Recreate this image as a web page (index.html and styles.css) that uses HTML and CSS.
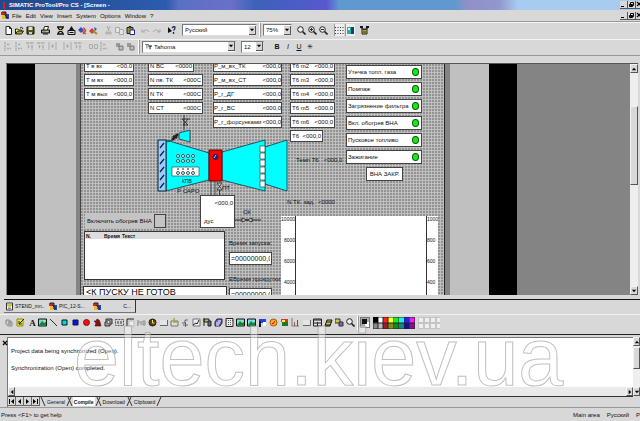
FILE: index.html
```html
<!DOCTYPE html>
<html lang="ru">
<head>
    <meta charset="UTF-8">
    <meta name="viewport" content="width=device-width, initial-scale=1.0">
    <title>SIMATIC ProTool/Pro CS</title>
    <link rel="stylesheet" href="styles.css">
</head>
<body>
    <!-- shared icons -->
    <svg class="defs" width="0" height="0">
        <symbol id="min" viewBox="0 0 7 7"><path d="M1 5.5h3" stroke="#000"/></symbol>
        <symbol id="restore" viewBox="0 0 7 7"><path d="M2.5 1.5h3v3h-3zM1.5 3.5h3v2h-3z" fill="#ddd" stroke="#000"/></symbol>
        <symbol id="close" viewBox="0 0 7 7"><path d="M1 1l4 4M5 1L1 5" stroke="#000" stroke-width="1.2"/></symbol>
        <symbol id="up" viewBox="0 0 7 7"><path d="M1 5l2.5-3L6 5z"/></symbol>
        <symbol id="down" viewBox="0 0 7 7"><path d="M1 2l2.5 3L6 2z"/></symbol>
        <symbol id="left" viewBox="0 0 7 7"><path d="M5 1L2 3.5 5 6z"/></symbol>
        <symbol id="right" viewBox="0 0 7 7"><path d="M2 1l3 2.500L2 6z"/></symbol>
        <symbol id="first" viewBox="0 0 7 7"><path d="M6 1L3 3.500 6 6zM1 1h1v5H1z"/></symbol>
        <symbol id="last" viewBox="0 0 7 7"><path d="M1 1l3 2.500L1 6zM5 1h1v5H5z"/></symbol>
        <symbol id="app" viewBox="0 0 9 9"><path d="M0 1h5v3H0z" fill="#d22"/><path d="M1 4h4v4H1z" fill="#eb2"/><path d="M5 3h3v5H5z" fill="#24b"/><path d="M1 1h4v6M3 3l4 4" stroke="#222" fill="none"/></symbol>
        <symbol id="page" viewBox="0 0 9 9"><path d="M1.500 1h6v7h-6z" fill="#fff" stroke="#333"/><path d="M2 2h5v2H2z" fill="#cc3"/><path d="M3 5h3M3 6.500h3" stroke="#555" stroke-width=".7"/></symbol>
        <symbol id="new" viewBox="0 0 9 9"><path d="M2 .5h3.500l2 2v6H2z" fill="#fff" stroke="#222"/><path d="M5.500.5v2h2" fill="none" stroke="#222"/></symbol>
        <symbol id="open" viewBox="0 0 9 9"><path d="M.5 8V3h2l1 1h3v1.500" fill="#ffa" stroke="#220"/><path d="M.5 8l2-3h6l-2 3z" fill="#aa3" stroke="#220"/><path d="M5 2q2-2 3 1" fill="none" stroke="#222"/></symbol>
        <symbol id="save" viewBox="0 0 9 9"><path d="M1 1h7v7H1z" fill="#551" stroke="#111"/><path d="M2.500 1h4v3h-4z" fill="#ddd"/><path d="M3 6h3v2H3z" fill="#ccc"/></symbol>
        <symbol id="print" viewBox="0 0 9 9"><path d="M2.500 4l1-3.500h4L6.500 4" fill="#fff" stroke="#222"/><path d="M.5 4h8v3h-8z" fill="#999" stroke="#111"/><path d="M2 8h5" stroke="#111"/><path d="M5 5.500h2" stroke="#dd3"/></symbol>
        <symbol id="gen" viewBox="0 0 9 9"><path d="M1 1h7M2 2l5 5M7 2L2 7M1 8h7" stroke="#111" stroke-width="1.300"/><path d="M3 4h4v1H3z" fill="#cc4"/></symbol>
        <symbol id="load" viewBox="0 0 9 9"><path d="M1 4.500h7v4H1z" fill="#ddd" stroke="#111"/><path d="M2 4l2.500-4L7 4z" fill="#111"/><path d="M2.500 6.500h4" stroke="#111"/></symbol>
        <symbol id="xfer" viewBox="0 0 9 9"><path d="M0 4l3-3 3 3-3 3z" fill="#25c"/><path d="M5 1l3 2-2 2z" fill="#d43"/><path d="M4 5l4 3M5 8l3-4" stroke="#c42" stroke-width="1.300"/></symbol>
        <symbol id="xfer2" viewBox="0 0 9 9"><path d="M0 5l3-3 3 3-3 3z" fill="#c43"/><path d="M5 1l3 2-2 2z" fill="#25c"/><path d="M4 5l4 3" stroke="#a82" stroke-width="2"/></symbol>
        <symbol id="cut" viewBox="0 0 9 9"><path d="M3 0l2 5M6 0L4 5" stroke="#aaa"/><path d="M2 6h2v2H2zM5 6h2v2H5z" fill="none" stroke="#aaa"/></symbol>
        <symbol id="copy" viewBox="0 0 9 9"><path d="M.5 1.500h4v5h-4zM4.500 3.500h4v5h-4z" fill="#e4e4e4" stroke="#aaa"/></symbol>
        <symbol id="paste" viewBox="0 0 9 9"><path d="M1 1.500h6v6H1z" fill="#993" stroke="#222"/><path d="M3 .5h2v1.500H3z" fill="#ccc" stroke="#222"/><path d="M4 4h4.500v4.500H4z" fill="#fff" stroke="#228"/></symbol>
        <symbol id="undo" viewBox="0 0 9 9"><path d="M1 3v3h3M1 6q5-4 7 0" fill="none" stroke="#aaa"/></symbol>
        <symbol id="redo" viewBox="0 0 9 9"><path d="M8 3v3H5M8 6Q3 2 1 6" fill="none" stroke="#aaa"/></symbol>
        <symbol id="help" viewBox="0 0 9 9"><path d="M1 1v6l4-2z" fill="#111"/><path d="M5 2q3-3 3 0 0 1-1.500 2.500M6.500 6v2" fill="none" stroke="#226" stroke-width="1.300"/></symbol>
        <symbol id="zoom" viewBox="0 0 9 9"><circle cx="3.500" cy="3.500" r="2.800" fill="#eee" stroke="#222"/><path d="M5.500 5.500l3 3" stroke="#222" stroke-width="1.600"/></symbol>
        <symbol id="zoomin" viewBox="0 0 9 9"><circle cx="3.500" cy="3.500" r="2.800" fill="#eee" stroke="#222"/><path d="M5.500 5.500l3 3" stroke="#222" stroke-width="1.600"/><path d="M2 3.500h3M3.500 2v3" stroke="#222"/></symbol>
        <symbol id="zoomout" viewBox="0 0 9 9"><circle cx="3.500" cy="3.500" r="2.800" fill="#eee" stroke="#222"/><path d="M5.500 5.500l3 3" stroke="#222" stroke-width="1.600"/><path d="M2 3.500h3" stroke="#222"/></symbol>
        <symbol id="dots" viewBox="0 0 9 9"><path d="M0 1.500h9M0 4.500h9M0 7.500h9" stroke="#333" stroke-dasharray="1 1.500"/></symbol>
        <symbol id="snap" viewBox="0 0 9 9"><path d="M1 1h6v7H1z" fill="#3aa"/><path d="M5 1h3v7H5z" fill="#146"/><path d="M2 2h2v2H2z" fill="#dff"/></symbol>
        <symbol id="tree" viewBox="0 0 9 9"><path d="M0 0h3v2H0zM6 0h3v2H6z" fill="#113"/><path d="M2 3h5v5H2z" fill="#cb3" stroke="#222"/><path d="M1 2l3 2 4-2M3 6h3" stroke="#222" fill="none"/></symbol>
        <symbol id="al1" viewBox="0 0 9 9"><path d="M1 0v9M3 2.500h3M3 6.500h4" stroke="#aaa" stroke-width="1.400" stroke-dasharray="2 .7"/></symbol>
        <symbol id="al2" viewBox="0 0 9 9"><path d="M0 1h8M2.500 3v4M6 3v5" stroke="#aaa" stroke-width="1.400" stroke-dasharray="3 .7"/></symbol>
        <symbol id="al3" viewBox="0 0 9 9"><path d="M1 0v8M8 0v8M3 4h3M4.500 2v4" stroke="#aaa"/></symbol>
        <symbol id="al4" viewBox="0 0 9 9"><path d="M.5 2.500h3v4h-3zM5.500 2.500h3v4h-3z" fill="none" stroke="#aaa"/></symbol>
        <symbol id="layer" viewBox="0 0 9 9"><path d="M1 1h4v4H1z" fill="#999"/><path d="M4 4h4v4H4z" fill="#bbb" stroke="#777"/></symbol>
        <symbol id="fnt" viewBox="0 0 9 9"><path d="M0 2h5M2.500 2v5" stroke="#777" stroke-width="1.300"/><path d="M4 4h5M6.500 4v4" stroke="#111" stroke-width="1.300"/></symbol>
        <symbol id="link" viewBox="0 0 9 9"><path d="M1 2h3l3 2v4H3L1 6z" fill="#ccc" stroke="#888"/><path d="M3 4h3M3 6h3" stroke="#777"/></symbol>
        <symbol id="note" viewBox="0 0 9 9"><path d="M1 1h6v7H1z" fill="#ee3" stroke="#882"/><path d="M3 6l5-5M3 3v3h3" stroke="#222" fill="none"/></symbol>
        <symbol id="pic" viewBox="0 0 9 9"><path d="M.5 1h8v7h-8z" fill="#7de" stroke="#111"/><path d="M1 7l3-4 2 2 2-1v3.500H1z" fill="#182"/><path d="M6 2h1v1H6z" fill="#ee2"/></symbol>
        <symbol id="line" viewBox="0 0 9 9"><path d="M1 1l7 7" stroke="#333"/></symbol>
        <symbol id="cyan" viewBox="0 0 9 9"><path d="M2 2h5v5H2z" fill="#0dd" stroke="#111"/></symbol>
        <symbol id="blue" viewBox="0 0 9 9"><path d="M2 2h5v5H2z" fill="#11d" stroke="#114"/></symbol>
        <symbol id="red" viewBox="0 0 9 9"><circle cx="4.500" cy="4.500" r="3" fill="#e11" stroke="#811"/></symbol>
        <symbol id="poly" viewBox="0 0 9 9"><path d="M2 8l1-3-2-2h2l1-2 2 1 1 2 1 4z" fill="#811" stroke="#411" stroke-width=".6"/></symbol>
        <symbol id="gear" viewBox="0 0 9 9"><path d="M2 1h6v5H6v2H1V4h1z" fill="#999" stroke="#333"/><circle cx="4.500" cy="4" r="1.500" fill="#eee" stroke="#222" stroke-width=".7"/></symbol>
        <symbol id="io" viewBox="0 0 9 9"><path d="M.5 1.500h8v6h-8z" fill="none" stroke="#555" stroke-dasharray="2 1"/><path d="M3 3v3M6 3v3" stroke="#333"/></symbol>
        <symbol id="box" viewBox="0 0 9 9"><path d="M1 8V1h7" fill="none" stroke="#222"/><path d="M3 3h5v5H3z" fill="#eee" stroke="#bbb"/></symbol>
        <symbol id="num" viewBox="0 0 9 9"><path d="M0 3h2v2H0v2h2M4 3v4M8 3H6v4h2z" fill="none" stroke="#888"/></symbol>
        <symbol id="clock" viewBox="0 0 9 9"><circle cx="4.500" cy="4.500" r="3.500" fill="#541" stroke="#221"/><path d="M4.500 2v3h2" fill="none" stroke="#fd6"/></symbol>
        <symbol id="btn" viewBox="0 0 9 9"><path d="M1 2h7v5H1z" fill="#e4e4e4"/><path d="M1 7.500h7.500V2" fill="none" stroke="#666"/></symbol>
        <symbol id="hand" viewBox="0 0 9 9"><path d="M1 3h7v5H1z" fill="#ddd" stroke="#777"/><path d="M4 0v4h3" fill="none" stroke="#aa2" stroke-width="1.500"/></symbol>
        <symbol id="sw" viewBox="0 0 9 9"><path d="M1 5h3V2h3M2 7h5M4.500 4v5" stroke="#666" fill="none"/></symbol>
        <symbol id="graph" viewBox="0 0 9 9"><path d="M1 1h7v7H1z" fill="#eee" stroke="#777"/><path d="M1 7l3-2 1 1 2-4" fill="none" stroke="#222"/></symbol>
        <symbol id="bars" viewBox="0 0 9 9"><path d="M1 0v8M1 1h5v3H1z" stroke="#222" fill="#bb5"/><path d="M5 3h3v5H5z" fill="#669" stroke="#222"/></symbol>
        <symbol id="cube" viewBox="0 0 9 9"><path d="M1 4l2-3h5v4L6 8H1z" fill="#66b" stroke="#224"/><path d="M2 5h4M2 7h3M4 3h3" stroke="#fff"/></symbol>
        <symbol id="grid" viewBox="0 0 9 9"><path d="M1 .5h7v8H1z" fill="#eee" stroke="#222"/><path d="M1 2.500h7M3 4.500h4M3 6.500h4" stroke="#555" stroke-dasharray="1 1"/></symbol>
        <symbol id="win" viewBox="0 0 9 9"><path d="M.5 1h8v7h-8z" fill="#ddd" stroke="#222"/><path d="M1 2h7M1 5h7M4.500 4v4" stroke="#222"/></symbol>
        <symbol id="flag" viewBox="0 0 9 9"><path d="M1 1h7v4H1z" fill="#24d"/><path d="M1 3h2v6H1z" fill="#114"/><path d="M5 4h3v4H5z" fill="#fff"/></symbol>
        <symbol id="sun" viewBox="0 0 9 9"><circle cx="4.500" cy="4.500" r="3.500" fill="#fa2" stroke="#a51"/><path d="M3 5l1 1 2-3" fill="none" stroke="#a22"/></symbol>
        <symbol id="brick" viewBox="0 0 9 9"><path d="M1 1h7v3H1z" fill="#d33"/><path d="M2 4h6v4H2z" fill="#272"/><path d="M2 2h3v2H2z" fill="#fe5"/></symbol>
        <symbol id="chart" viewBox="0 0 9 9"><path d="M1 0v8h7" fill="none" stroke="#777"/><path d="M3 4h1v4H3z" fill="#a55"/><path d="M6 2h1v6H6z" fill="#557"/></symbol>
        <symbol id="book" viewBox="0 0 9 9"><path d="M1 8l2-6h5L6 8z" fill="#cc6" stroke="#111"/><path d="M3 4h4M2 7h4" stroke="#111"/></symbol>
        <symbol id="find" viewBox="0 0 9 9"><path d="M0 1h5v4H0z" fill="#cc4" stroke="#333"/><path d="M4 4h4v4H4z" fill="#76b" stroke="#333"/></symbol>
    </svg>

    <div class="app">
        <header class="title-bar">
            <span class="app-mark"></span>
            <h1>SIMATIC ProTool/Pro CS - [Screen -</h1>
            <div class="win-buttons">
                <button aria-label="Minimize"><svg><use href="#min"/></svg></button>
                <button aria-label="Restore"><svg><use href="#restore"/></svg></button>
                <button aria-label="Close"><svg><use href="#close"/></svg></button>
            </div>
        </header>

        <nav class="menu-bar">
            <svg class="icon"><use href="#app"/></svg>
            <button>File</button><button>Edit</button><button>View</button><button>Insert</button><button>System</button><button>Options</button><button>Window</button><button>?</button>
            <div class="win-buttons">
                <button aria-label="Minimize"><svg><use href="#min"/></svg></button>
                <button aria-label="Restore"><svg><use href="#restore"/></svg></button>
                <button aria-label="Close"><svg><use href="#close"/></svg></button>
            </div>
        </nav>

        <div class="toolbar">
            <div class="group">
                <button aria-label="New"><svg><use href="#new"/></svg></button>
                <button aria-label="Open"><svg><use href="#open"/></svg></button>
                <button aria-label="Save"><svg><use href="#save"/></svg></button>
            </div>
            <div class="group"><button aria-label="Print"><svg><use href="#print"/></svg></button></div>
            <div class="group">
                <button aria-label="Generate"><svg><use href="#gen"/></svg></button>
                <button aria-label="Download"><svg><use href="#load"/></svg></button>
                <button aria-label="Transfer"><svg><use href="#xfer"/></svg></button>
                <button aria-label="Transfer back"><svg><use href="#xfer2"/></svg></button>
            </div>
            <div class="group">
                <button aria-label="Cut"><svg><use href="#cut"/></svg></button>
                <button aria-label="Copy"><svg><use href="#copy"/></svg></button>
                <button aria-label="Paste"><svg><use href="#paste"/></svg></button>
            </div>
            <div class="group">
                <button aria-label="Undo"><svg><use href="#undo"/></svg></button>
                <button aria-label="Redo"><svg><use href="#redo"/></svg></button>
            </div>
            <div class="group"><button aria-label="Help"><svg><use href="#help"/></svg></button></div>
            <div class="combo combo-lang"><select aria-label="Language"><option>Русский</option></select><svg><use href="#down"/></svg></div>
            <span class="sep"></span>
            <div class="combo combo-zoom"><select aria-label="Zoom"><option>75%</option></select><svg><use href="#down"/></svg></div>
            <div class="group">
                <button aria-label="Zoom area"><svg><use href="#zoom"/></svg></button>
                <button aria-label="Zoom in"><svg><use href="#zoomin"/></svg></button>
                <button aria-label="Zoom out"><svg><use href="#zoomout"/></svg></button>
            </div>
            <div class="group">
                <button class="pressed" aria-label="Grid"><svg><use href="#dots"/></svg></button>
                <button class="pressed" aria-label="Snap"><svg><use href="#snap"/></svg></button>
            </div>
            <div class="group"><button aria-label="References"><svg><use href="#tree"/></svg></button></div>
        </div>

        <div class="toolbar toolbar-format">
            <div class="group">
                <button aria-label="Align left"><svg><use href="#al1"/></svg></button>
                <button aria-label="Align right"><svg><use href="#al1"/></svg></button>
                <button aria-label="Align top"><svg><use href="#al2"/></svg></button>
                <button aria-label="Align bottom"><svg><use href="#al2"/></svg></button>
                <button aria-label="Center"><svg><use href="#al3"/></svg></button>
            </div>
            <div class="group">
                <button aria-label="Space across"><svg><use href="#al3"/></svg></button>
                <button aria-label="Space down"><svg><use href="#al2"/></svg></button>
            </div>
            <div class="group">
                <button aria-label="Same width"><svg><use href="#al4"/></svg></button>
                <button aria-label="Same height"><svg><use href="#al1"/></svg></button>
            </div>
            <div class="group">
                <button aria-label="To front"><svg><use href="#layer"/></svg></button>
                <button aria-label="To back"><svg><use href="#layer"/></svg></button>
            </div>
            <span class="sep"></span>
            <div class="combo combo-font"><svg class="icon"><use href="#fnt"/></svg><select aria-label="Font"><option>Tahoma</option></select><svg><use href="#down"/></svg></div>
            <div class="combo combo-size"><select aria-label="Size"><option>12</option></select><svg><use href="#down"/></svg></div>
            <div class="group styles">
                <button><b>B</b></button><button><i>I</i></button><button><u>U</u></button><button>✳</button>
            </div>
        </div>

        <main class="workspace">
            <div class="bezel bezel-left"></div>
            <div class="gutter"></div>
            <section class="screen">
                <div class="stack stack-temp">
                    <div class="field"><span>Т в вх</span><span>&lt;00,0</span></div>
                    <div class="field"><span>Т м вх</span><span>&lt;000,0</span></div>
                    <div class="field"><span>Т м вых</span><span>&lt;000,0</span></div>
                </div>
                <div class="stack stack-speed">
                    <div class="field field-short"><span>N ВС</span><span>&lt;0000</span></div>
                    <div class="field"><span>N пв. ТК</span><span>&lt;000C</span></div>
                    <div class="field"><span>N ТК</span><span>&lt;000C</span></div>
                    <div class="field"><span>N СТ</span><span>&lt;000C</span></div>
                </div>
                <div class="stack stack-pressure">
                    <div class="field"><span>Р_м_вх_ТК</span><span>&lt;000,0</span></div>
                    <div class="field"><span>Р_м_вх_СТ</span><span>&lt;000,0</span></div>
                    <div class="field"><span>Р_г_ДГ</span><span>&lt;000,0</span></div>
                    <div class="field"><span>Р_г_ВС</span><span>&lt;000,0</span></div>
                    <div class="field"><span>Р_г_форсунками</span><span>&lt;000,0</span></div>
                </div>
                <div class="stack stack-t6">
                    <div class="field"><span>Т6 m2</span><span>&lt;000,0</span></div>
                    <div class="field"><span>Т6 m3</span><span>&lt;000,0</span></div>
                    <div class="field"><span>Т6 m4</span><span>&lt;000,0</span></div>
                    <div class="field"><span>Т6 m5</span><span>&lt;000,0</span></div>
                    <div class="field"><span>Т6 m6</span><span>&lt;000,0</span></div>
                    <div class="field field-short"><span>Т6</span><span>&lt;000,0</span></div>
                </div>
                <div class="alarms">
                    <div class="field">Утечка топл. газа<i class="lamp"></i></div>
                    <div class="field">Помпаж<i class="lamp"></i></div>
                    <div class="field">Загрязнение фильтра<i class="lamp"></i></div>
                    <div class="field">Вкл. обогрев ВНА<i class="lamp"></i></div>
                    <div class="field">Пусковое топливо<i class="lamp"></i></div>
                    <div class="field">Зажигание<i class="lamp"></i></div>
                    <div class="field state">ВНА ЗАКР.</div>
                </div>

                <!-- gas turbine mimic -->
                <svg class="turbine" viewBox="70 50 140 120" width="140" height="120">
                    <g fill="#0ff" stroke="#134" stroke-width=".8">
                        <path d="M85 76l43 13v27l-43 11z"/>
                        <path d="M141 88l43-12v51l-43-11z"/>
                        <path d="M184 83l22-7v51l-22-7z"/>
                        <path d="M98 69l11-3v12l-11-3z"/>
                    </g>
                    <path d="M77 76h8v51h-8z" fill="#9cf" stroke="#123"/>
                    <path d="M79 84l4-5M79 92l4-5M79 100l4-5M79 108l4-5M79 116l4-5M79 124l4-5" stroke="#124" stroke-width="1.300"/>
                    <path d="M130 116v15M134 116v15" stroke="#333" stroke-width=".8"/>
                    <path d="M128 86h13v31h-13z" fill="#f00" stroke="#511"/>
                    <circle cx="134.500" cy="93" r="3" fill="#226"/><path d="M133 94l2-3" stroke="#9cf"/>
                    <g fill="#fff" stroke="#255" stroke-width=".7">
                        <path d="M179 82h5v6h-5zM179 89h5v6h-5zM179 96h5v6h-5zM179 103h5v6h-5zM179 110h5v6h-5zM179 117h5v6h-5z"/>
                        <path d="M91 103h27v9H91z"/>
                    </g>
                    <g fill="#dff" stroke="#244" stroke-width=".9">
                        <circle cx="97" cy="92" r="1.500"/><circle cx="102" cy="92" r="1.500"/><circle cx="107" cy="92" r="1.500"/><circle cx="112" cy="92" r="1.500"/>
                        <circle cx="97" cy="97" r="1.500"/><circle cx="102" cy="97" r="1.500"/><circle cx="107" cy="97" r="1.500"/><circle cx="112" cy="97" r="1.500"/>
                        <circle cx="97" cy="109" r="1.500"/><circle cx="102" cy="109" r="1.500"/><circle cx="107" cy="109" r="1.500"/><circle cx="112" cy="109" r="1.500"/>
                    </g>
                    <path d="M96 105h2M101 105h2M106 105h2M111 105h2" stroke="#222"/>
                    <path d="M91 76l6-6M92 72l4 2" stroke="#222" stroke-width="2.500"/>
                    <path d="M103 51v15M101 55h8M101 55l6 6M107 55l-5 6h5M91 76l-5 2" fill="none" stroke="#222" stroke-width=".8"/>
                    <path d="M136 119h5l-5 7h5z M138.500 126v5" fill="#ccc" stroke="#222" stroke-width=".8"/>
                    <path d="M154 156h26" stroke="#222"/><path d="M161 154v4l10-4v4z" fill="#ccc" stroke="#222" stroke-width=".8"/>
                </svg>
                <span class="tag tag-kpv">КПВ</span>
                <span class="tag tag-sapo">Р САРО</span>
                <span class="tag tag-pt">ПТ</span>
                <span class="tag tag-sk">СК</span>
                <div class="tank"><span>&lt;000,0</span><span>дус</span></div>
                <span class="tag tag-temp">Темп Т6 &nbsp; &lt;000,0</span>
                <span class="tag tag-ntk">N ТК &nbsp;зад. &nbsp;&lt;0000</span>

                <div class="heating"><label for="heat">Включить обогрев ВНА</label><button id="heat" aria-label="Включить"></button></div>
                <table class="messages">
                    <thead><tr><th>N.</th><th>Время</th><th>Текст</th></tr></thead>
                    <tbody><tr><td colspan="3"></td></tr></tbody>
                </table>
                <div class="ready">&lt;К ПУСКУ НЕ ГОТОВ</div>
                <div class="timers">
                    <label for="start">Время запуска:</label>
                    <input id="start" type="text" value="=00000000,0">
                    <label for="crank">ЕВремя прокрутки:</label>
                    <input id="crank" type="text" value="=00000000,0">
                </div>
                <div class="trend">
                    <div class="scale"><span>10000</span><span>8000</span><span>6000</span><span>4000</span></div>
                    <div class="plot"></div>
                    <div class="scale"><span>1000</span><span>800</span><span>600</span><span>400</span></div>
                </div>
            </section>
            <div class="gutter gutter-right"></div>
            <div class="bezel"></div>
            <div class="empty"></div>
            <div class="scroll-v">
                <button aria-label="Up"><svg><use href="#up"/></svg></button>
                <span class="thumb"></span>
                <button aria-label="Down"><svg><use href="#down"/></svg></button>
            </div>
        </main>

        <div class="doc-tabs">
            <button><svg class="icon"><use href="#page"/></svg>STEND_mn..</button>
            <button><svg class="icon"><use href="#app"/></svg>PIC_12-S...</button>
            <button class="active"><svg class="icon"><use href="#app"/></svg><span>C...</span></button>
        </div>

        <div class="palette">
            <button aria-label="Link"><svg><use href="#link"/></svg></button>
            <button aria-label="Note"><svg><use href="#note"/></svg></button>
            <button class="letter">A</button>
            <button aria-label="Graphic"><svg><use href="#pic"/></svg></button>
            <button aria-label="Line"><svg><use href="#line"/></svg></button>
            <button aria-label="Rectangle"><svg><use href="#cyan"/></svg></button>
            <button aria-label="Filled rectangle"><svg><use href="#blue"/></svg></button>
            <button aria-label="Ellipse"><svg><use href="#red"/></svg></button>
            <button aria-label="Polygon"><svg><use href="#poly"/></svg></button>
            <button aria-label="Control"><svg><use href="#gear"/></svg></button>
            <button aria-label="Field"><svg><use href="#io"/></svg></button>
            <button aria-label="Frame"><svg><use href="#box"/></svg></button>
            <button aria-label="Number"><svg><use href="#num"/></svg></button>
            <button aria-label="Clock"><svg><use href="#clock"/></svg></button>
            <button aria-label="Button"><svg><use href="#btn"/></svg></button>
            <button aria-label="State button"><svg><use href="#hand"/></svg></button>
            <button aria-label="Switch"><svg><use href="#sw"/></svg></button>
            <button aria-label="Trend"><svg><use href="#graph"/></svg></button>
            <button aria-label="Bar"><svg><use href="#bars"/></svg></button>
            <button aria-label="Messages"><svg><use href="#cube"/></svg></button>
            <button aria-label="Table"><svg><use href="#grid"/></svg></button>
            <button aria-label="Picture"><svg><use href="#pic"/></svg></button>
            <button aria-label="Picture list"><svg><use href="#pic"/></svg></button>
            <button aria-label="Flag"><svg><use href="#flag"/></svg></button>
            <button aria-label="Gauge"><svg><use href="#sun"/></svg></button>
            <button aria-label="Tiles"><svg><use href="#brick"/></svg></button>
            <button aria-label="Chart"><svg><use href="#chart"/></svg></button>
            <button aria-label="Panel"><svg><use href="#btn"/></svg></button>
            <button aria-label="Window"><svg><use href="#win"/></svg></button>
            <button aria-label="Book"><svg><use href="#book"/></svg></button>
            <button aria-label="Find"><svg><use href="#find"/></svg></button>
            <button aria-label="Zoom"><svg><use href="#zoom"/></svg></button>
            <span class="sep"></span>
            <span class="current"></span>
            <svg class="colors" viewBox="0 0 42 12">
                <path d="M0 0h42v12H0z" fill="#222"/>
                <path d="M0 0h5v5H0z" fill="#000"/><path d="M5.500.5h4v5h-4z" fill="#fff"/><path d="M10.500.5h4v5h-4z" fill="#f22"/><path d="M15.500.5h5v5h-5z" fill="#ff2"/><path d="M21 .5h4.500v5H21z" fill="#1e2"/><path d="M26 .5h5v5h-5z" fill="#2ee"/><path d="M31.500.5h4.500v5h-4.500z" fill="#22e"/><path d="M36.500.5h5v5h-5z" fill="#e2d"/>
                <path d="M.5 6.500h4v5h-4z" fill="#888"/><path d="M5.500 6.500h4v5h-4z" fill="#bbb"/><path d="M10.500 6.500h4v5h-4z" fill="#922"/><path d="M15.500 6.500h5v5h-5z" fill="#882"/><path d="M21 6.500h4.500v5H21z" fill="#182"/><path d="M26 6.500h5v5h-5z" fill="#188"/><path d="M31.500 6.500h4.500v5h-4.500z" fill="#118"/><path d="M36.500 6.500h5v5h-5z" fill="#818"/>
            </svg>
            <span class="custom"></span>
        </div>

        <section class="output">
            <div class="grip"><button aria-label="Close"><svg><use href="#close"/></svg></button></div>
            <div class="output-body">
                <div class="log">
                    <p>Project data being synchronized (Open).</p>
                    <p>Synchronization (Open) completed.</p>
                </div>
                <div class="scroll-h">
                    <button aria-label="Left"><svg><use href="#left"/></svg></button>
                    <button aria-label="Right"><svg><use href="#right"/></svg></button>
                </div>
                <div class="output-tabs">
                    <button class="step"><svg><use href="#first"/></svg></button><button class="step"><svg><use href="#left"/></svg></button><button class="step"><svg><use href="#right"/></svg></button><button class="step"><svg><use href="#last"/></svg></button>
                    <svg class="edge edge-open"><path d="M1 0l4 9"/></svg><button>General</button><svg class="edge"><path d="M1 9L5 0M2 0l4 9"/></svg><button class="active">Compile</button><svg class="edge"><path d="M1 9L5 0M2 0l4 9"/></svg><button>Download</button><svg class="edge"><path d="M1 9L5 0M2 0l4 9"/></svg><button>Clipboard</button><svg class="edge"><path d="M1 9L5 0"/></svg>
                </div>
            </div>
            <div class="scroll-v scroll-log">
                <button aria-label="Up"><svg><use href="#up"/></svg></button>
                <span class="thumb"></span>
                <button aria-label="Down"><svg><use href="#down"/></svg></button>
            </div>
            <div class="watermark">eltech.kiev.ua</div>
        </section>

        <footer class="status">
            <span class="hint">Press &lt;F1&gt; to get help</span>
            <span>Main area</span><span>Русский</span><span>Р</span>
        </footer>
    </div>
</body>
</html>
```
FILE: styles.css
```css
* {
    box-sizing: border-box;
}

body {
    margin: 0;
    background: #d8d8d8;
    color: #111;
    font-family: 'Liberation Sans', Arial, sans-serif;
    font-size: 6px;
    line-height: 8px;
    overflow: hidden;
}

button, select, input {
    font: inherit;
    color: inherit;
    margin: 0;
    padding: 0;
    border: 0;
    border-radius: 0;
    background: none;
    appearance: none;
}

button svg, .combo svg {
    display: block;
    width: 7px;
    height: 7px;
}

.icon {
    width: 9px;
    height: 9px;
    flex: none;
}

.defs {
    position: absolute;
}

.app {
    display: flex;
    flex-direction: column;
    height: 100vh;
}

/* title and menu */
.title-bar {
    display: flex;
    align-items: center;
    height: 10px;
    flex: none;
    padding-left: 3px;
    background: linear-gradient(90deg, #20488c 0, #2c5cae 26%, #5a70c4 28%, #6a70c8 36%, #3c62b8 40%, #5858d0 51%, #6098d0 53%, #6098d0 71%, #9090c8 73%, #9098cc 78%, #a8ccf0 81%);
    color: #fff;
}

.app-mark {
    width: 2px;
    height: 7px;
    background: #c23;
    margin-right: 4px;
}

.title-bar h1 {
    margin: 0;
    font-size: 6px;
}

.win-buttons {
    display: flex;
    margin-left: auto;
    margin-right: -4px;
}

.win-buttons button {
    width: 8px;
    height: 8px;
    background: #d8d8d8;
    border-right: 1px solid #555;
    border-bottom: 1px solid #555;
}

.menu-bar {
    display: flex;
    align-items: center;
    gap: 4px;
    height: 12px;
    flex: none;
    padding-left: 1px;
    border-bottom: 1px solid #999;
}

.menu-bar > .icon {
    margin-right: -2px;
}

/* toolbars */
.toolbar {
    display: flex;
    align-items: center;
    gap: 5px;
    height: 17px;
    flex: none;
    padding: 0 4px 2px;
    border-top: 1px solid #f4f4f4;
}

.toolbar-format {
    border-bottom: 1px solid #999;
}

.toolbar .sep {
    margin: 0 -3px;
}

.group {
    display: flex;
    gap: 1px;
}

.group button {
    width: 10px;
    height: 12px;
}

.group svg {
    width: 9px;
    height: 9px;
}

.group .pressed {
    background: #eee;
    border-left: 1px solid #999;
}

.sep {
    width: 2px;
    height: 14px;
    border-left: 1px solid #fff;
    border-right: 1px solid #999;
}

.combo {
    display: flex;
    align-items: center;
    height: 12px;
    background: #fff;
    border: 1px solid #777;
    border-right-color: #ddd;
    border-bottom-color: #ddd;
    padding-left: 2px;
}

.combo select {
    flex: 1;
    min-width: 0;
}

.combo > svg:last-child {
    background: #d8d8d8;
    border-right: 1px solid #555;
    border-bottom: 1px solid #555;
    height: 9px;
}

.combo-lang { width: 75px; }
.combo-zoom { width: 29px; }
.combo-font { width: 94px; }
.combo-size { width: 23px; }

.combo > .icon {
    margin-right: 2px;
}

.styles {
    padding-left: 3px;
    font-size: 7px;
}

/* editor area */
.workspace {
    display: flex;
    flex: 1;
    min-height: 0;
    margin: 7px 2px 4px 6px;
    border-top: 1px solid #555;
    background: #848484;
}

.bezel {
    width: 67px;
    background: #c0c0c0;
    border-right: 28px solid #000;
}

.bezel-left {
    width: 69px;
    margin-left: 1px;
    border-right: 0;
    border-left: 28px solid #000;
}

.gutter {
    width: 5px;
    background: #848484;
    border-right: 1px solid #444;
}

.gutter-right {
    border-right: 0;
    border-left: 1px solid #222;
    width: 6px;
}

.empty {
    flex: 1;
}

.screen {
    position: relative;
    width: 363px;
    overflow: hidden;
    background: #c4c4c4 radial-gradient(circle at 1px 1px, #939393 30%, transparent 60%) 0 0 / 3px 3px;
}

/* mimic objects are placed freely on the screen canvas */
.stack, .alarms, .turbine, .tag, .tank, .heating, .messages, .ready, .timers, .trend {
    position: absolute;
    white-space: nowrap;
}

.stack {
    display: flex;
    flex-direction: column;
    gap: 2px;
    top: -4px;
}

.field {
    display: flex;
    justify-content: space-between;
    align-items: center;
    height: 12px;
    padding: 0 1px;
    background: #fff;
    border: 1px solid #444;
}

.stack-temp { left: 3px; width: 50px; }
.stack-speed { left: 67px; width: 55px; }
.stack-pressure { left: 132px; width: 69px; }
.stack-t6 { left: 209px; width: 45px; }
.stack-speed .field-short { width: 46px; }
.stack-t6 .field-short { width: 33px; }

.stack-pressure .field {
    padding: 0;
}

.alarms {
    display: flex;
    flex-direction: column;
    gap: 3px;
    left: 265px;
    top: 1px;
    width: 76px;
}

.alarms .field {
    height: 14px;
}

.alarms .state {
    width: 37px;
    margin-left: 20px;
    justify-content: center;
}

.lamp {
    flex: none;
    width: 7px;
    height: 8px;
    margin-right: 1px;
    border-radius: 50%;
    background: #1e1;
    border: 1px solid #151;
}

.turbine {
    left: 70px;
    top: 50px;
}

.tag-kpv { left: 101px; top: 113px; font-size: 5px; }
.tag-sapo { left: 96px; top: 123px; }
.tag-pt { left: 141px; top: 120px; }
.tag-sk { left: 162px; top: 144px; }
.tag-temp { left: 215px; top: 92px; }
.tag-ntk { left: 206px; top: 134px; }

.tank {
    display: flex;
    flex-direction: column;
    justify-content: space-between;
    left: 119px;
    top: 131px;
    width: 35px;
    height: 33px;
    padding: 3px 1px 2px 3px;
    background: #fff;
    border: 1px solid #444;
}

.tank span:first-child {
    text-align: right;
}

.heating {
    display: flex;
    align-items: center;
    justify-content: space-between;
    left: 4px;
    top: 149px;
    width: 81px;
    height: 15px;
    padding-left: 2px;
    background: #c4c4c4;
}

.heating button {
    width: 12px;
    height: 14px;
    background: #c4c4c4;
    border: 1px solid #444;
}

.messages {
    left: 3px;
    top: 167px;
    width: 141px;
    height: 49px;
    border: 1px solid #333;
    border-spacing: 0;
    background: #fff;
    font-size: 5px;
    line-height: 6px;
}

.messages th {
    height: 7px;
    padding: 0 1px;
    background: #ddd;
    text-align: left;
}

.messages th:nth-child(1) { width: 18px; }
.messages th:nth-child(2) { width: 18px; }

.ready {
    left: 2px;
    top: 222px;
    width: 144px;
    height: 16px;
    padding: 0 2px;
    background: #fff;
    border: 1px solid #333;
    font-size: 9px;
    line-height: 10px;
    color: #000;
}

.timers {
    display: flex;
    flex-direction: column;
    left: 148px;
    top: 175px;
}

.timers input {
    width: 43px;
    height: 13px;
    margin: 5px 0 10px;
    padding: 0 1px;
    background: #fff;
    border: 1px solid #444;
    font-size: 7px;
}

.trend {
    display: flex;
    left: 200px;
    top: 152px;
    width: 157px;
    height: 90px;
    background: #fff;
    font-size: 5px;
    line-height: 6px;
}

.plot {
    flex: 1;
    border-left: 1px solid #333;
    border-right: 1px solid #333;
}

.scale {
    display: flex;
    flex-direction: column;
    gap: 15px;
    width: 14px;
    text-align: right;
}

.scale:last-child {
    width: 11px;
    text-align: left;
}

/* scroll bars */
.scroll-v {
    display: flex;
    flex-direction: column;
    width: 8px;
    background: #eee;
}

.scroll-v button, .scroll-h button, .thumb {
    background: #d8d8d8;
    border: 1px solid #f4f4f4;
    border-right-color: #555;
    border-bottom-color: #555;
}

.scroll-v button {
    height: 9px;
}

.scroll-v button svg, .scroll-h button svg {
    width: 6px;
    height: 6px;
}

.scroll-v .thumb {
    height: 34%;
    margin-top: 33px;
}

.scroll-v button:last-child {
    margin-top: auto;
}

/* open documents */
.doc-tabs {
    display: flex;
    height: 15px;
    flex: none;
    margin-left: 4px;
    border-top: 1px solid #111;
    background: #d8d8d8;
}

.doc-tabs button {
    display: flex;
    align-items: center;
    gap: 1px;
    height: 13px;
    width: 44px;
    padding-left: 1px;
    font-size: 5px;
    white-space: nowrap;
    border-bottom: 1px solid #777;
}

.doc-tabs .active {
    justify-content: space-between;
    padding-right: 4px;
    border-right: 1px solid #333;
}

/* object palette */
.palette {
    display: flex;
    align-items: center;
    height: 20px;
    flex: none;
    padding: 0 0 4px 5px;
    border-top: 1px solid #f2f2f2;
}

.palette button {
    width: 11px;
    height: 10px;
}

.palette button svg {
    width: 9px;
    height: 9px;
}

.palette .letter {
    font: bold 9px/10px 'Liberation Serif', serif;
}

.current {
    width: 10px;
    height: 11px;
    margin: 0 3px 0 1px;
    background: linear-gradient(#111, #111) 1px 1px / 5px 5px no-repeat, linear-gradient(#fff, #fff) 4px 4px / 5px 5px no-repeat, #aaa;
    border: 1px solid #777;
}

.colors {
    width: 42px;
    height: 12px;
}

.custom {
    width: 22px;
    height: 12px;
    margin-left: 3px;
    background: radial-gradient(circle at 3px 3px, #eee 50%, #c4c4c4 60%) 0 0 / 6px 6px;
}

/* output window */
.output {
    position: relative;
    display: flex;
    height: 74px;
    flex: none;
    padding-top: 2px;
    border-top: 1px solid #222;
    border-bottom: 1px solid #999;
}

.grip {
    width: 8px;
    padding: 2px 0 0 2px;
    border-right: 1px solid #777;
}

.grip button {
    width: 6px;
    height: 8px;
}

.output-body {
    display: flex;
    flex-direction: column;
    flex: 1;
    min-width: 0;
}

.log {
    flex: 1;
    padding: 9px 3px 0;
    background: #fff;
    border-top: 1px solid #777;
}

.log p {
    margin: 0 0 9px;
}

.log p:last-child {
    margin-bottom: 0;
}

.scroll-h {
    display: flex;
    justify-content: space-between;
    height: 9px;
    flex: none;
    background: #eaeaea;
}

.scroll-h button {
    width: 7px;
}

.output-tabs {
    display: flex;
    height: 11px;
    flex: none;
    border-top: 1px solid #333;
    font-size: 5px;
}

.output-tabs button {
    height: 9px;
    padding: 0 1px;
}

.output-tabs .step {
    width: 8px;
    padding: 0;
    border-right: 1px solid #666;
    border-bottom: 1px solid #666;
}

.output-tabs .active {
    background: #fff;
    font-weight: bold;
}

.edge {
    width: 7px;
    height: 9px;
    fill: none;
    stroke: #333;
}

.edge-open {
    width: 6px;
}

.scroll-log {
    width: 7px;
    margin-bottom: 11px;
}

.scroll-log .thumb {
    height: 22px;
    margin-top: 1px;
}

.watermark {
    position: absolute;
    left: 74px;
    top: -23px;
    font: 81px/90px 'Liberation Sans', sans-serif;
    color: rgba(255, 255, 255, 0.4);
    -webkit-text-stroke: 1px rgba(150, 150, 150, 0.6);
    pointer-events: none;
}

/* status line */
.status {
    display: flex;
    align-items: center;
    gap: 7px;
    height: 13px;
    flex: none;
    padding: 0 0 0 1px;
}

.hint {
    flex: 1;
}
```
